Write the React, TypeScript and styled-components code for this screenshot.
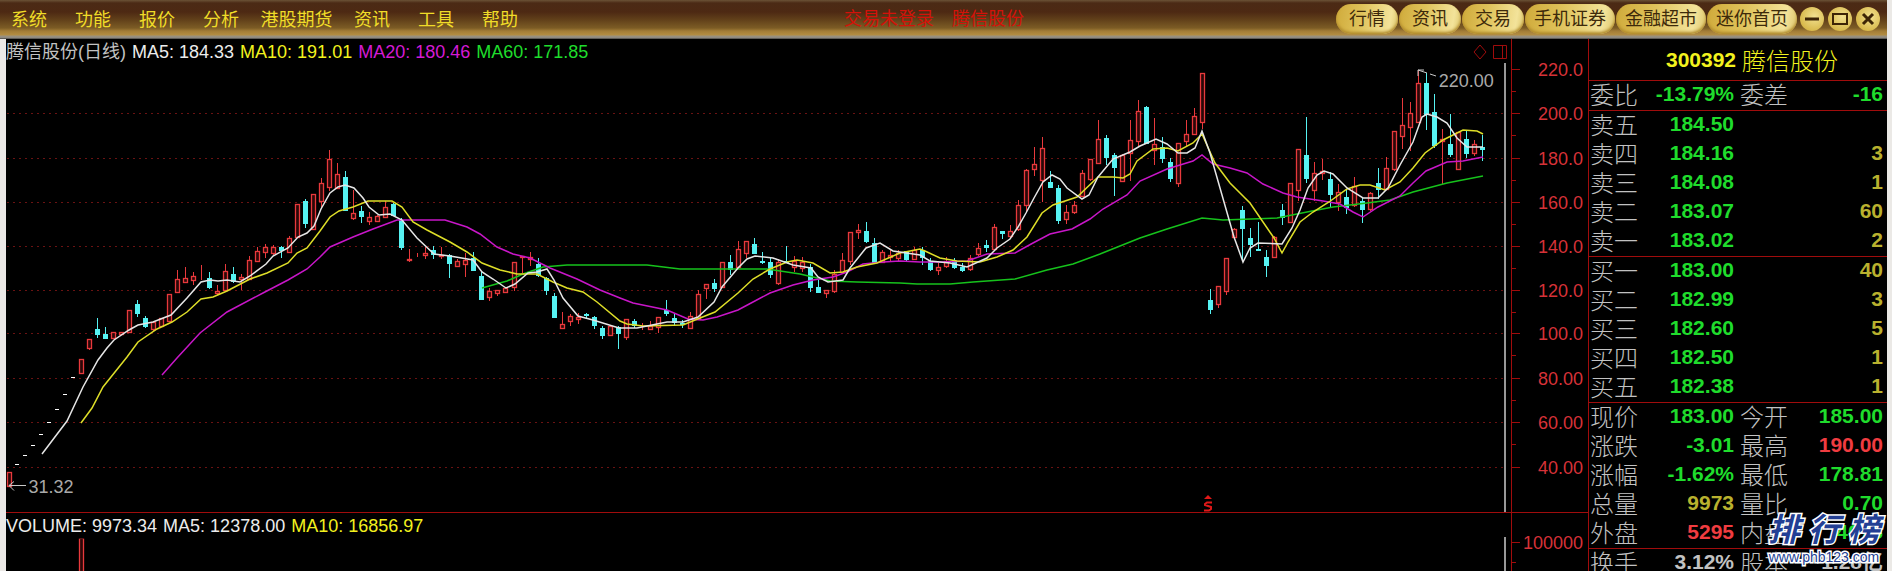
import React from "react";
import styled, { createGlobalStyle } from "styled-components";

const colors = {
  up: "#e8393c",
  down: "#56f2f2",
  line: "#a00c0c",
  grid: "#6a1212",
  scale: "#d63238",
  green: "#1fdc2c",
  red: "#f03c40",
  olive: "#b9b12e",
  grey: "#c2c2c2",
  yellow: "#f2f21e",
  magenta: "#d41bd4",
  white: "#ececec",
};

const latin = `"Liberation Sans", "Noto Sans CJK SC", sans-serif`;

const GlobalStyle = createGlobalStyle`
  * { box-sizing: border-box; }
  body { margin: 0; background: #000; font-family: ${latin}; overflow: hidden; }
`;

const Page = styled.div`
  display: flex;
  flex-direction: column;
  height: 100vh;
  padding-right: 5px;
  background: #ebe9e6;
`;

const TopBar = styled.header`
  display: flex;
  flex: none;
  align-items: center;
  height: 39px;
  padding-bottom: 2px;
  background: linear-gradient(
    to bottom,
    #6b5236 0px, #4b2a15 3px, #4d2913 12px, #62411a 20px,
    #7c5c25 28px, #a27c36 31px, #b38d43 35px, #9a917e 36px,
    #8b8881 38px, #33312e 39px
  );
`;

const Menu = styled.nav`
  display: flex;
  margin-left: -3px;
`;

const MenuButton = styled.button<{ $wide?: boolean }>`
  width: ${(p) => (p.$wide ? 87 : 64)}px;
  padding: 2px 0 0;
  border: 0;
  background: none;
  color: #f0dc28;
  font: 18px/34px ${latin};
`;

const Status = styled.p`
  display: flex;
  flex: 1;
  justify-content: center;
  gap: 18px;
  margin: 0;
  color: #d31209;
  font-size: 18px;
  line-height: 34px;
  white-space: nowrap;
`;

const Shortcuts = styled.div`
  display: flex;
  gap: 1px;
  margin-right: 3px;
`;

const Pill = styled.button<{ $wide?: boolean }>`
  width: ${(p) => (p.$wide ? 90 : 62)}px;
  height: 30px;
  padding: 0;
  border: 0;
  border-radius: 15px;
  background: linear-gradient(100deg, #cfaa3a 0%, #dfc25a 40%, #f3e39a 85%, #dcc56a 100%);
  box-shadow: inset 0 -2px 3px #b08a2c;
  color: #3d2a0a;
  font: 18px/30px ${latin};
  white-space: nowrap;
`;

const WindowControls = styled.div`
  display: flex;
  gap: 4px;
  margin-right: 7px;
`;

const RoundButton = styled.button`
  display: flex;
  align-items: center;
  justify-content: center;
  width: 24px;
  height: 24px;
  padding: 0;
  border: 0;
  border-radius: 50%;
  background: radial-gradient(circle at 60% 40%, #f2e190, #d8b94c 70%, #b08c30);
`;

const Main = styled.main`
  display: flex;
  flex: 1;
  min-height: 0;
  padding-left: 6px;
`;

const Charts = styled.div`
  display: flex;
  flex: 1;
  flex-direction: column;
  min-width: 0;
  background: #000;
`;

const Panel = styled.section<{ $grow?: boolean }>`
  display: flex;
  flex: ${(p) => (p.$grow ? "1" : "none")};
  min-height: 0;
  overflow: hidden;
  border-bottom: ${(p) => (p.$grow ? "0" : `1px solid ${colors.line}`)};
`;

const PlotColumn = styled.div`
  display: flex;
  flex: 1;
  flex-direction: column;
  min-width: 0;
`;

const Legend = styled.div`
  display: flex;
  flex: none;
  align-items: center;
  gap: 6px;
  height: 24px;
  padding-top: 2px;
  font-size: 18px;
  line-height: 22px;
  white-space: nowrap;
`;

const LegendItem = styled.span<{ $color: string }>`
  color: ${(p) => p.$color};
`;

const LegendIcons = styled.svg`
  margin-left: auto;
  margin-right: 3px;
`;

const PlotArea = styled.div`
  position: relative;
`;

const Plot = styled.svg<{ $height: number }>`
  display: block;
  width: 100%;
  height: ${(p) => p.$height}px;
`;

const PriceNote = styled.span<{ $left: number; $top: number }>`
  position: absolute;
  left: ${(p) => p.$left}%;
  top: ${(p) => p.$top}px;
  color: #a9a9a9;
  font-size: 18px;
  line-height: 20px;
`;

const Axis = styled.svg`
  display: block;
  flex: none;
  width: 77px;
  border-left: 1px solid ${colors.line};
`;

const Side = styled.aside`
  position: relative;
  flex: none;
  width: 299px;
  border-left: 1px solid ${colors.line};
  background: #000;
  overflow: hidden;
`;

const StockTitle = styled.h1`
  display: flex;
  align-items: center;
  justify-content: center;
  gap: 6px;
  height: 42px;
  margin: 0;
  padding-left: 28px;
  border-bottom: 1px solid ${colors.line};
  color: ${colors.yellow};
  font-size: 21px;
`;

const StockName = styled.span`
  font-family: "Noto Sans CJK SC", sans-serif;
  font-size: 24px;
  font-weight: 300;
  line-height: 36px;
`;

const Quotes = styled.table`
  width: 100%;
  table-layout: fixed;
  border-collapse: separate;
  border-spacing: 0;
  border-bottom: 1px solid ${colors.line};
  white-space: nowrap;
`;

const Label = styled.th<{ $second?: boolean }>`
  width: ${(p) => (p.$second ? 56 : 50)}px;
  height: 29px;
  padding: 0 0 0 ${(p) => (p.$second ? 6 : 1)}px;
  color: ${colors.grey};
  font-family: "Noto Sans CJK SC", sans-serif;
  font-size: 24px;
  font-weight: 300;
  line-height: 26px;
  text-align: left;
  vertical-align: top;
`;

const Value = styled.td<{ $color: string; $last?: boolean }>`
  width: ${(p) => (p.$last ? "auto" : "95px")};
  padding: 0 ${(p) => (p.$last ? 4 : 0)}px 0 0;
  color: ${(p) => p.$color};
  font-size: 21px;
  font-weight: bold;
  line-height: 26px;
  text-align: right;
  vertical-align: top;
`;

const Watermark = styled.a`
  position: absolute;
  right: 7px;
  bottom: 6px;
  width: 112px;
  color: #233f94;
  text-decoration: none;
  paint-order: stroke fill;
  -webkit-text-stroke: 3px #fff;
`;

const WatermarkName = styled.span`
  display: flex;
  justify-content: space-between;
  font-size: 32px;
  font-style: italic;
  font-weight: 700;
  line-height: 38px;
`;

const WatermarkSite = styled.span`
  display: block;
  font-size: 14px;
  line-height: 16px;
  text-align: center;
`;

/* One trading day: R rising, F falling, L locked at the limit;
   then high, body top, body bottom, low. */
type Candle = ["R" | "F" | "L", number, number, number, number];

const candles: Candle[] = [
  ["R",472,472,486,486],["L",464,464,464,464],["L",455,455,455,455],["L",445,445,445,445],
  ["L",434,434,434,434],["L",422,422,422,422],["L",409,409,409,409],["L",394,394,394,394],
  ["L",377,377,377,377],["R",359,359,373,373],["R",339,339,348,349],["F",318,329,334,337],
  ["F",327,334,338,338],["R",332,332,338,338],["R",332,332,334,334],["R",310,310,332,332],
  ["F",300,304,313,316],["F",316,318,326,327],["R",322,322,329,330],["R",318,318,326,326],
  ["R",294,294,321,321],["R",270,279,292,292],["R",267,278,282,282],["R",272,276,280,284],
  ["R",265,275,275,279],["F",272,278,287,288],["R",285,291,293,294],["R",264,271,290,290],
  ["F",267,274,281,282],["R",274,277,279,289],["R",256,260,279,279],["R",247,251,261,261],
  ["R",244,247,252,257],["R",245,247,253,255],["F",246,247,250,257],["R",236,238,252,252],
  ["R",204,204,237,237],["F",199,201,223,227],["R",194,194,229,229],["R",178,183,201,208],
  ["R",150,159,187,190],["R",163,174,188,188],["F",171,177,210,210],["R",190,213,218,219],
  ["F",206,211,216,222],["R",212,217,221,224],["R",215,216,221,221],["R",201,207,217,217],
  ["F",203,204,215,215],["F",218,220,247,249],["R",249,259,260,261],["R",253,255,255,256],
  ["R",247,253,255,258],["F",246,250,254,258],["R",247,255,256,258],["F",254,255,263,277],
  ["R",259,261,266,266],["R",253,260,264,276],["F",252,258,270,270],["F",272,276,299,299],
  ["R",288,291,297,300],["R",290,290,293,295],["R",287,288,292,292],["R",262,262,287,290],
  ["R",256,256,257,272],["R",252,257,259,265],["F",258,264,275,276],["F",277,278,290,294],
  ["F",293,296,317,317],["R",312,324,328,328],["R",314,316,321,325],["R",313,317,319,323],
  ["F",313,314,315,317],["F",316,317,325,328],["F",326,328,335,338],["R",326,326,335,335],
  ["F",326,327,333,348],["R",319,319,337,339],["F",319,321,325,327],["R",323,325,325,329],
  ["R",321,326,329,329],["R",317,317,327,332],["F",300,310,313,315],["F",314,318,322,324],
  ["F",320,323,324,327],["R",312,316,328,328],["R",290,294,319,319],["R",284,284,288,298],
  ["F",279,283,288,291],["R",262,262,287,287],["F",255,262,269,274],["R",241,249,267,267],
  ["R",241,241,253,257],["F",238,244,253,253],["F",252,261,262,263],["F",257,262,274,277],
  ["R",259,262,283,284],["F",246,261,262,262],["R",256,261,267,271],["R",257,262,268,271],
  ["F",264,267,287,291],["F",280,287,292,292],["R",290,290,293,297],["R",270,274,291,292],
  ["R",253,260,272,272],["R",232,232,261,264],["R",224,230,232,238],["F",222,231,241,242],
  ["F",238,243,262,262],["R",250,252,262,262],["R",250,255,257,260],["R",250,253,258,260],
  ["F",251,251,259,260],["R",247,250,259,259],["F",247,250,257,264],["F",258,261,269,270],
  ["R",263,267,270,274],["R",257,261,266,267],["F",258,261,267,268],["F",263,267,270,271],
  ["R",255,258,269,270],["R",243,248,254,255],["F",240,245,247,251],["R",224,227,249,249],
  ["F",231,231,233,238],["R",225,231,236,238],["R",200,205,229,230],["R",169,170,205,212],
  ["R",147,164,169,175],["R",137,148,180,201],["F",171,182,187,187],["F",185,188,220,223],
  ["R",205,212,219,223],["R",201,205,212,213],["R",170,173,196,196],["R",159,159,179,180],
  ["R",120,139,163,163],["F",135,138,157,164],["F",153,155,167,195],["R",154,155,181,181],
  ["R",120,140,153,180],["R",100,111,141,145],["F",106,107,143,143],["R",118,144,150,164],
  ["F",137,147,158,162],["F",158,162,178,181],["R",143,143,183,186],["R",120,134,141,145],
  ["R",108,116,134,134],["R",73,73,122,128],["F",289,300,309,313],["R",286,286,304,307],
  ["R",258,258,291,294],["R",228,229,237,238],["F",206,210,228,260],["F",228,238,244,256],
  ["F",222,249,250,250],["F",250,257,265,276],["R",236,237,257,257],["F",204,210,217,224],
  ["R",183,183,222,222],["R",149,149,190,200],["F",117,155,178,182],["R",162,173,190,200],
  ["R",159,171,173,179],["F",172,179,194,207],["R",184,192,202,210],["F",190,197,207,213],
  ["R",177,186,205,206],["F",198,201,209,222],["R",192,193,209,210],["F",168,183,189,198],
  ["R",157,168,189,189],["R",131,131,169,170],["R",98,125,136,148],["R",102,113,127,150],
  ["R",70,83,122,122],["F",73,83,114,129],["F",94,112,145,147],["R",129,139,141,183],
  ["F",114,144,154,156],["R",132,132,169,169],["F",131,139,153,157],["R",140,144,153,155],
  ["F",135,147,149,160],
];

const averages = [
  {
    color: "#16c21c",
    points: "482,288 507,281 523,274 543,267 567,265 620,265 647,265 680,269 767,269 800,274 830,281 857,282 900,283 917,284 950,284 973,282 1015,279 1047,270 1073,264 1100,254 1140,238 1167,229 1202,218 1223,220 1277,218 1307,212 1333,207 1367,203 1390,200 1413,192 1447,183 1483,176",
  },
  {
    color: "#c816c8",
    points: "162,375 177,358 200,333 227,312 263,293 288,280 307,269 320,257 330,247 353,237 373,229 397,220 445,220 467,227 480,234 497,247 513,254 530,258 550,268 577,279 600,290 620,298 633,303 667,310 688,319 703,320 717,317 738,310 753,302 770,293 793,285 813,280 833,277 847,272 863,264 883,262 900,261 920,262 943,262 967,261 987,254 1015,253 1033,243 1050,234 1072,229 1090,219 1103,209 1127,195 1140,181 1167,169 1193,161 1202,155 1213,164 1230,168 1247,173 1263,184 1283,193 1297,197 1323,201 1340,204 1353,212 1363,217 1378,207 1400,196 1413,183 1426,171 1447,162 1463,161 1483,157",
  },
  {
    color: "#dede28",
    points: "81,423 92,408 103,387 127,357 138,342 157,329 172,322 187,312 201,299 213,297 227,291 250,279 267,273 288,263 297,253 307,248 320,231 330,217 339,211 353,207 368,201 379,201 392,201 402,207 413,222 427,230 450,242 467,252 482,263 500,270 517,274 537,274 553,282 567,288 583,292 597,302 620,321 627,324 643,326 683,325 700,318 715,312 738,293 753,279 770,269 787,262 797,260 813,263 830,273 843,272 857,267 877,263 900,253 920,249 925,251 940,258 957,261 980,262 997,257 1013,250 1027,237 1042,213 1053,205 1077,197 1098,177 1113,177 1123,178 1130,174 1137,161 1153,149 1167,148 1178,151 1193,143 1202,134 1215,163 1230,183 1250,203 1263,222 1274,238 1282,253 1288,242 1300,222 1313,212 1329,202 1347,189 1360,185 1370,185 1385,190 1400,182 1413,168 1425,153 1443,140 1463,130 1477,131 1483,134",
  },
  {
    color: "#e6e6e6",
    points: "42,454 67,421 83,387 98,360 107,348 114,340 129,330 138,325 153,322 171,315 187,298 201,282 210,280 218,281 227,280 240,282 250,276 266,264 273,256 288,248 298,237 307,233 314,226 321,209 330,193 338,187 345,185 354,188 363,198 369,207 379,215 390,214 402,220 417,238 434,254 450,256 473,260 482,272 493,279 506,288 515,284 528,273 537,272 547,269 554,280 563,298 578,316 593,320 619,328 637,328 657,324 667,322 683,322 698,317 714,302 722,287 738,268 747,259 755,256 773,258 793,265 811,268 818,277 828,282 843,280 850,268 866,248 880,243 893,251 920,255 930,261 950,263 967,267 987,258 997,248 1010,239 1018,227 1026,213 1034,198 1043,182 1052,175 1060,179 1067,188 1082,199 1089,195 1098,177 1113,159 1130,152 1140,146 1156,139 1167,144 1178,153 1187,153 1195,148 1202,131 1210,153 1234,237 1243,262 1250,248 1258,243 1282,244 1292,228 1300,210 1308,188 1317,175 1324,171 1333,174 1347,188 1363,198 1378,198 1388,188 1400,165 1413,142 1422,117 1427,114 1437,117 1447,123 1457,138 1467,147 1483,147",
  },
];

const scale = [
  { y: 69, text: "220.0" },
  { y: 113, text: "200.0" },
  { y: 158, text: "180.0" },
  { y: 202, text: "160.0" },
  { y: 246, text: "140.0" },
  { y: 290, text: "120.0" },
  { y: 333, text: "100.0" },
  { y: 378, text: "80.00" },
  { y: 422, text: "60.00" },
  { y: 467, text: "40.00" },
];

function CandleMark({ index, candle }: { index: number; candle: Candle }) {
  const [kind, high, top, bottom, low] = candle;
  const x = Math.round(9 + index * 8.008);
  if (kind === "L") return <rect x={x - 2} y={top} width={4} height={1} fill="#fff" />;
  if (kind === "F")
    return (
      <g fill={colors.down}>
        <rect x={x} y={high} width={1} height={low - high + 1} />
        <rect x={x - 2} y={top} width={5} height={bottom - top + 1} />
      </g>
    );
  return (
    <g fill={colors.up}>
      <rect x={x} y={high} width={1} height={top - high} />
      <rect x={x} y={bottom} width={1} height={low - bottom + 1} />
      <rect
        x={x - 1.5}
        y={top + 0.5}
        width={4}
        height={bottom - top}
        fill="#2a0808"
        stroke={colors.up}
        strokeWidth="1.3"
      />
    </g>
  );
}

function PricePlot() {
  return (
    <Plot $height={449} viewBox="6 63 1505 449" preserveAspectRatio="none" aria-label="日线">
      {scale.slice(1).map((s) => (
        <line key={s.y} x1="7" x2="1505" y1={s.y + 0.5} y2={s.y + 0.5} stroke={colors.grid} strokeDasharray="2 4" />
      ))}
      {candles.map((c, i) => (
        <CandleMark key={i} index={i} candle={c} />
      ))}
      {averages.map((a) => (
        <polyline key={a.color} points={a.points} fill="none" stroke={a.color} strokeWidth="1.5" />
      ))}
      <path d="M9 485.500H26M9 485.500l5 -4M9 485.500l5 5" fill="none" stroke="#c8c8c8" />
      <path d="M1418 70l9 3M1430 74l6 2M1418 70h6M1418 70v6" fill="none" stroke="#c8c8c8" />
      <path d="M1204 499l4 -4 4 4z" fill="#e01818" />
      <path d="M1212 502.500h-5l-2 1.500v1l6 2v2l-2 1.500h-5" fill="none" stroke="#e01818" strokeWidth="2" />
      <rect x="1504" y="63" width="2" height="449" fill="#989898" />
    </Plot>
  );
}

function PriceAxis() {
  return (
    <Axis viewBox="1512 39 76 473" height="473">
      {scale.map((s) => (
        <g key={s.y}>
          <path d={`M1512 ${s.y + 0.5}h8`} stroke={colors.line} />
          {s.y < 460 && <path d={`M1512 ${s.y + 22.5}h4`} stroke={colors.line} />}
          <text x="1583" y={s.y + 7} fill={colors.scale} fontSize="18" textAnchor="end">
            {s.text}
          </text>
        </g>
      ))}
    </Axis>
  );
}

const menu = ["系统", "功能", "报价", "分析", "港股期货", "资讯", "工具", "帮助"];
const shortcuts = ["行情", "资讯", "交易", "手机证券", "金融超市", "迷你首页"];

const sell = [
  ["卖五", "184.50", ""],
  ["卖四", "184.16", "3"],
  ["卖三", "184.08", "1"],
  ["卖二", "183.07", "60"],
  ["卖一", "183.02", "2"],
];
const buy = [
  ["买一", "183.00", "40"],
  ["买二", "182.99", "3"],
  ["买三", "182.60", "5"],
  ["买四", "182.50", "1"],
  ["买五", "182.38", "1"],
];

type Pair = [string, string, string];
const balance: [Pair, Pair][] = [
  [["委比", "-13.79%", colors.green], ["委差", "-16", colors.green]],
];
const summary: [Pair, Pair][] = [
  [["现价", "183.00", colors.green], ["今开", "185.00", colors.green]],
  [["涨跌", "-3.01", colors.green], ["最高", "190.00", colors.red]],
  [["涨幅", "-1.62%", colors.green], ["最低", "178.81", colors.green]],
  [["总量", "9973", colors.olive], ["量比", "0.70", colors.green]],
  [["外盘", "5295", colors.red], ["内盘", "4678", colors.green]],
];
const capital: [Pair, Pair][] = [
  [["换手", "3.12%", colors.grey], ["股本", "1.28亿", colors.grey]],
];

function OrderBook({ rows }: { rows: string[][] }) {
  return (
    <Quotes>
      <tbody>
        {rows.map(([label, price, amount]) => (
          <tr key={label}>
            <Label scope="row">{label}</Label>
            <Value $color={colors.green}>{price}</Value>
            <Value $color={colors.olive} $last>{amount}</Value>
          </tr>
        ))}
      </tbody>
    </Quotes>
  );
}

function PairTable({ rows }: { rows: [Pair, Pair][] }) {
  return (
    <Quotes>
      <tbody>
        {rows.map(([a, b]) => (
          <tr key={a[0]}>
            <Label scope="row">{a[0]}</Label>
            <Value $color={a[2]}>{a[1]}</Value>
            <Label scope="row" $second>{b[0]}</Label>
            <Value $color={b[2]} $last>{b[1]}</Value>
          </tr>
        ))}
      </tbody>
    </Quotes>
  );
}

export default function App() {
  return (
    <Page>
      <GlobalStyle />
      <TopBar>
        <Menu>
          {menu.map((m) => (
            <MenuButton key={m} $wide={m.length > 2}>{m}</MenuButton>
          ))}
        </Menu>
        <Status>
          <span>交易未登录</span>
          <span>腾信股份</span>
        </Status>
        <Shortcuts>
          {shortcuts.map((s) => (
            <Pill key={s} $wide={s.length > 2}>{s}</Pill>
          ))}
        </Shortcuts>
        <WindowControls>
          <RoundButton aria-label="最小化">
            <svg width="24" height="24"><path d="M5 12h14" stroke="#3d2506" strokeWidth="3" /></svg>
          </RoundButton>
          <RoundButton aria-label="最大化">
            <svg width="24" height="24"><rect x="5" y="7" width="14" height="10" fill="none" stroke="#3d2506" strokeWidth="2" /></svg>
          </RoundButton>
          <RoundButton aria-label="关闭">
            <svg width="24" height="24"><path d="M7 7l10 10M17 7l-10 10" stroke="#3d2506" strokeWidth="3" /></svg>
          </RoundButton>
        </WindowControls>
      </TopBar>
      <Main>
        <Charts>
          <Panel>
            <PlotColumn>
              <Legend>
                <LegendItem $color={colors.grey}>腾信股份(日线)</LegendItem>
                <LegendItem $color={colors.white}>MA5: 184.33</LegendItem>
                <LegendItem $color={colors.yellow}>MA10: 191.01</LegendItem>
                <LegendItem $color={colors.magenta}>MA20: 180.46</LegendItem>
                <LegendItem $color={colors.green}>MA60: 171.85</LegendItem>
                <LegendIcons width="36" height="16" fill="none" stroke={colors.line}>
                  <path d="M8 1l6 7-6 7-6-7zM21.500 1.500h13v13h-13zM30.500 1.500v13" />
                </LegendIcons>
              </Legend>
              <PlotArea>
                <PricePlot />
                <PriceNote $left={1.5} $top={414}>31.32</PriceNote>
                <PriceNote $left={95.2} $top={8}>220.00</PriceNote>
              </PlotArea>
            </PlotColumn>
            <PriceAxis />
          </Panel>
          <Panel $grow>
            <PlotColumn>
              <Legend>
                <LegendItem $color={colors.white}>VOLUME: 9973.34</LegendItem>
                <LegendItem $color={colors.white}>MA5: 12378.00</LegendItem>
                <LegendItem $color={colors.yellow}>MA10: 16856.97</LegendItem>
              </Legend>
              <Plot $height={100} viewBox="6 537 1505 100" preserveAspectRatio="none" aria-label="VOLUME">
                <rect x="79.500" y="542.500" width="4" height="95" fill="#2a0808" stroke={colors.up} strokeWidth="1.3" />
                <rect x="1504" y="537" width="2" height="100" fill="#989898" />
              </Plot>
            </PlotColumn>
            <Axis viewBox="1512 513 76 124" height="124">
              <path d="M1512 542.500h8M1512 562.500h4" stroke={colors.line} />
              <text x="1583" y="549" fill={colors.scale} fontSize="18" textAnchor="end">100000</text>
            </Axis>
          </Panel>
        </Charts>
        <Side>
          <StockTitle>
            300392 <StockName>腾信股份</StockName>
          </StockTitle>
          <PairTable rows={balance} />
          <OrderBook rows={sell} />
          <OrderBook rows={buy} />
          <PairTable rows={summary} />
          <PairTable rows={capital} />
          <Watermark href="#">
            <WatermarkName>
              <span>排</span>
              <span>行</span>
              <span>榜</span>
            </WatermarkName>
            <WatermarkSite>www.phb123.com</WatermarkSite>
          </Watermark>
        </Side>
      </Main>
    </Page>
  );
}
